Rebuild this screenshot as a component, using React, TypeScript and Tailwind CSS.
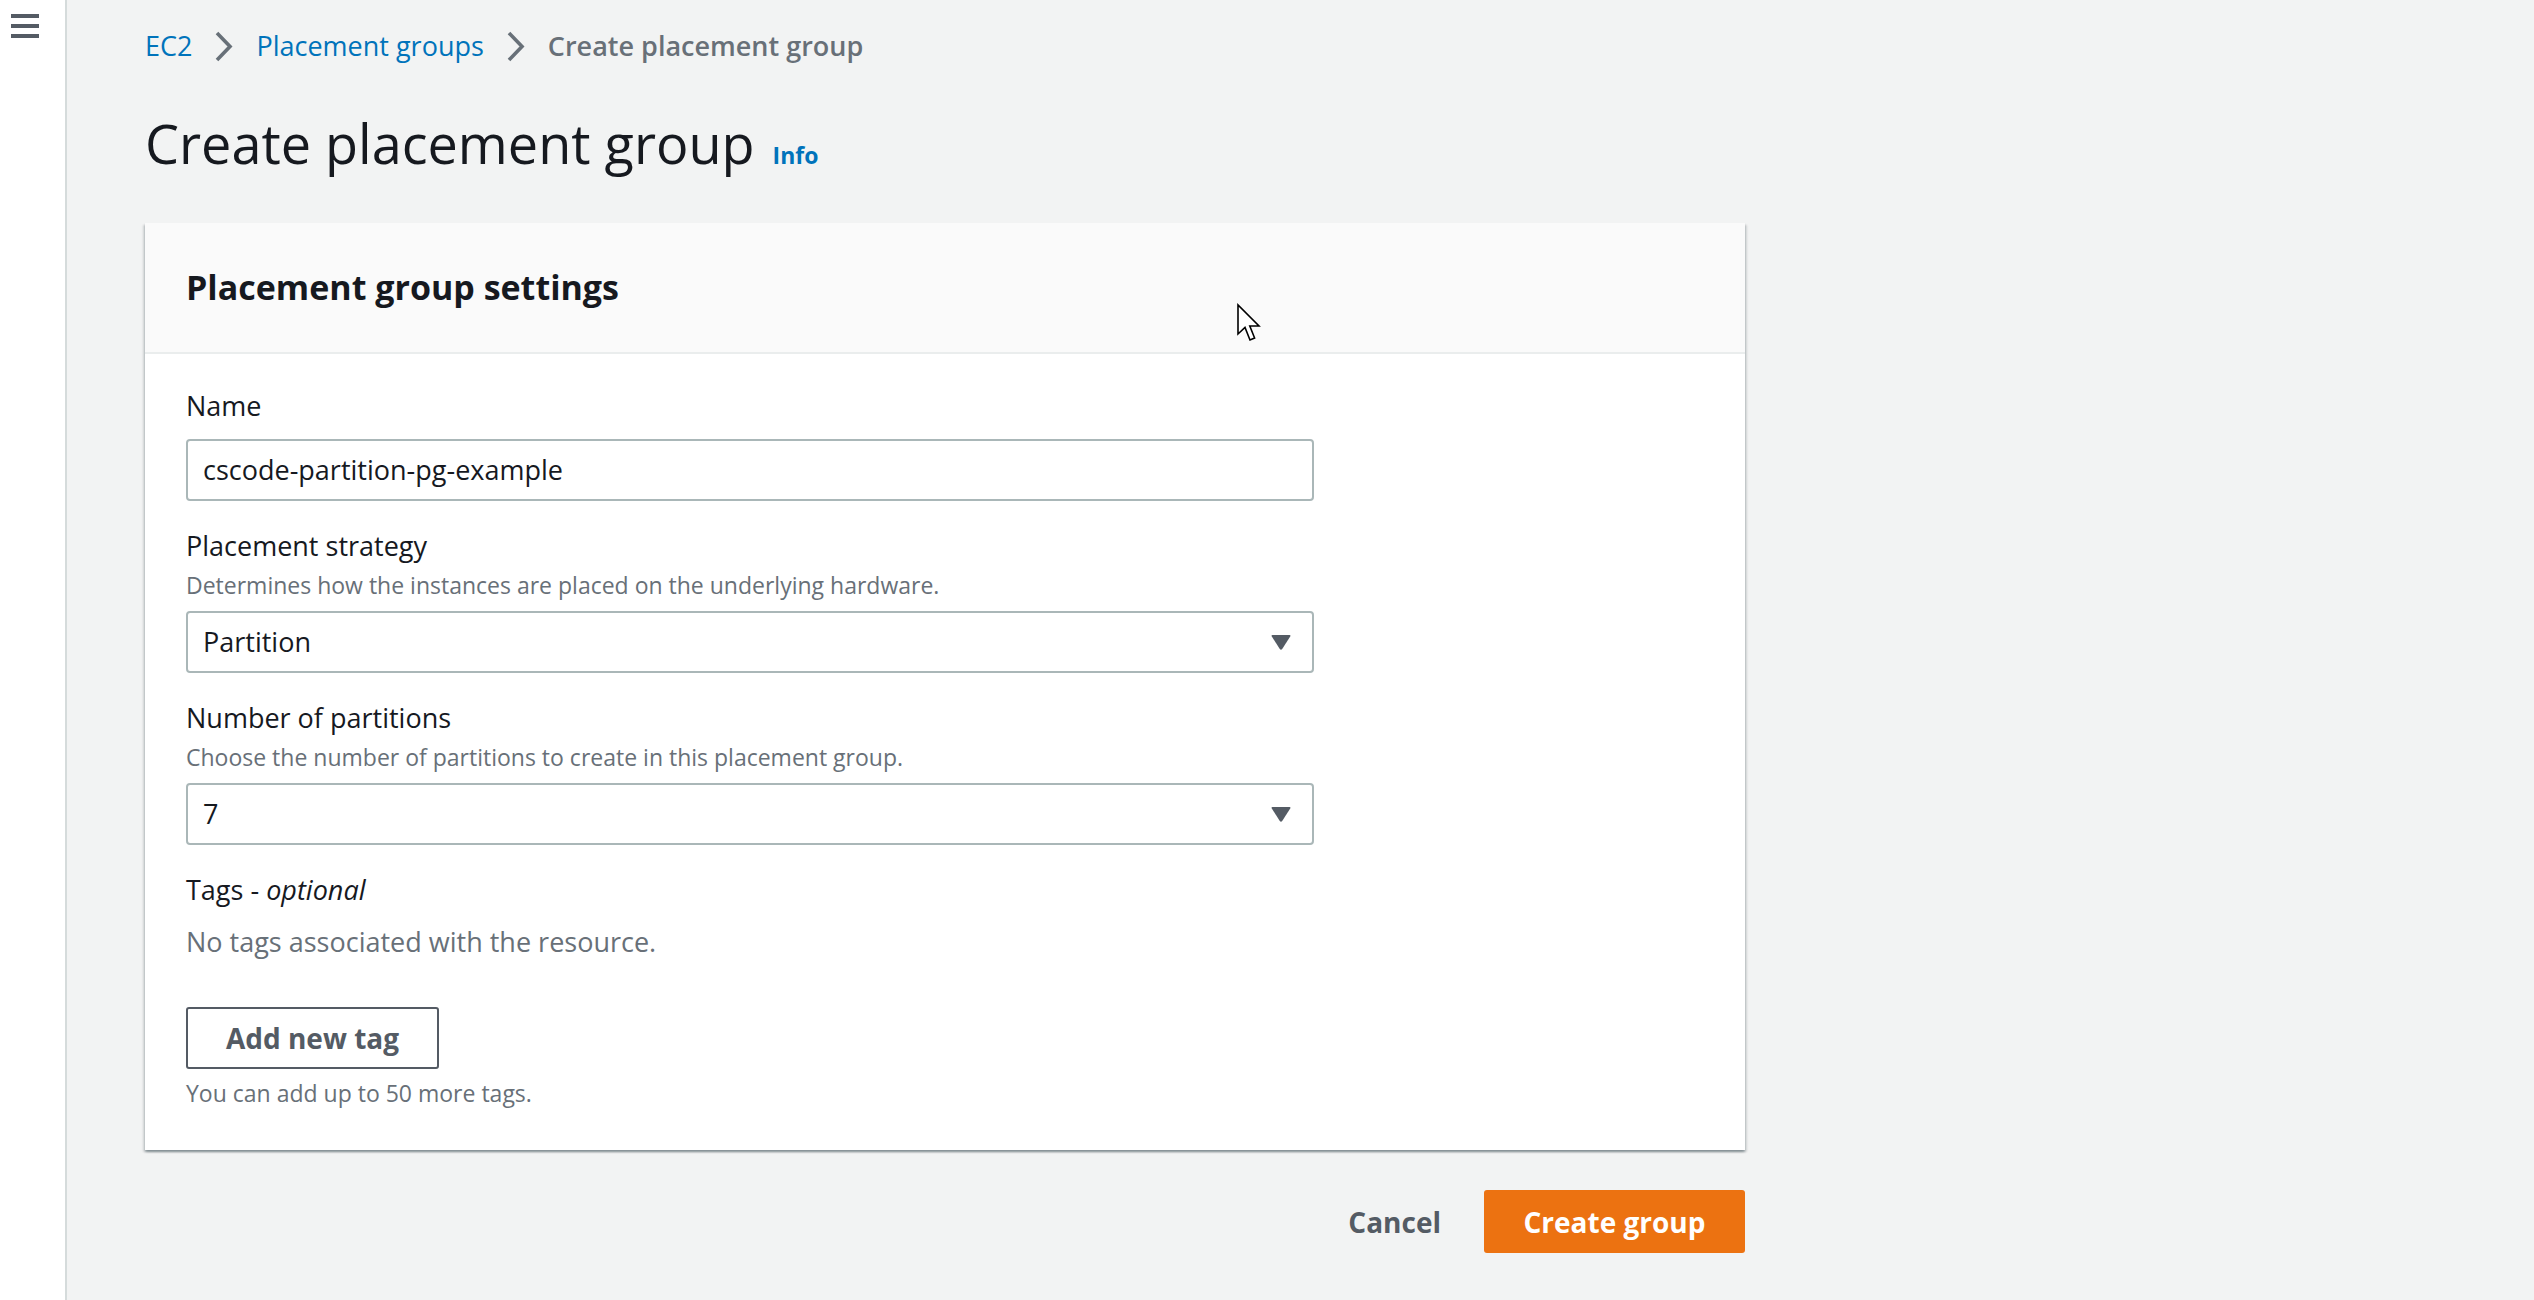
const font = { fontFamily: '"Open Sans", "Noto Sans", sans-serif' };

function Crumb() {
  return (
    <svg width="18" height="31" viewBox="0 0 18 31" className="mx-[23px] shrink-0">
      <path d="M2 2 L15 15.5 L2 29" fill="none" stroke="#687078" strokeWidth="3.6" />
    </svg>
  );
}

function Caret() {
  return (
    <svg width="22" height="18" viewBox="0 0 22 18" className="shrink-0">
      <path d="M2.5 2 L19.5 2 Q21 2 20.2 3.4 L12.2 16 Q11 17.6 9.8 16 L1.8 3.4 Q1 2 2.5 2 Z" fill="#545b64" />
    </svg>
  );
}

function Field({ label, desc, children }: { label: string; desc?: string; children: React.ReactNode }) {
  return (
    <div className="mt-[25px] first:mt-0">
      <div className="text-[27px] leading-[40px] text-[#16191f]">{label}</div>
      {desc && <div className="mt-[3px] text-[23px] leading-[32px] text-[#687078]">{desc}</div>}
      <div className={desc ? "mt-[10px]" : "mt-[13px]"}>{children}</div>
    </div>
  );
}

function Select({ value }: { value: string }) {
  return (
    <div className="flex h-[62px] w-[1128px] items-center justify-between rounded-[4px] border-2 border-[#aab7b8] bg-white pl-[15px] pr-[20px] text-[27px] text-[#16191f]">
      <span>{value}</span>
      <Caret />
    </div>
  );
}

export default function App() {
  return (
    <div className="flex min-h-[1300px] bg-[#f2f3f3]" style={font}>
      {/* side nav (collapsed) */}
      <aside className="w-[67px] shrink-0 border-r-2 border-[#d5dbdb] bg-white">
        <div className="ml-[11px] mt-[14px] flex w-[28px] flex-col gap-[6px]">
          <span className="h-[4px] bg-[#545b64]" />
          <span className="h-[4px] bg-[#545b64]" />
          <span className="h-[4px] bg-[#545b64]" />
        </div>
      </aside>

      <main className="flex-1 pl-[78px]">
        <nav className="flex items-center pt-[26px] text-[27px] leading-[40px]">
          <span className="text-[#0073bb]">EC2</span>
          <Crumb />
          <span className="text-[#0073bb]">Placement groups</span>
          <Crumb />
          <span className="font-semibold text-[#687078]">Create placement group</span>
        </nav>

        <div className="mt-[42px] flex items-baseline gap-[18px]">
          <h1 className="text-[54px] leading-[70px] font-normal text-[#16191f]">Create placement group</h1>
          <span className="text-[23px] font-bold text-[#0073bb]">Info</span>
        </div>

        <section className="mt-[45px] w-[1600px] bg-white shadow-[0_2px_2px_0_rgba(0,28,36,0.3),2px_2px_2px_0_rgba(0,28,36,0.12),-2px_2px_2px_0_rgba(0,28,36,0.12)]">
          <header className="relative flex h-[131px] items-center border-b-2 border-[#eaeded] bg-[#fafafa] px-[41px]">
            <h2 className="text-[34px] font-bold text-[#16191f]">Placement group settings</h2>
            <svg className="absolute left-[1091px] top-[80px]" width="26" height="40" viewBox="0 0 13 20">
              <path d="M1 1 L1 15.5 L4.5 12.2 L7 18.5 L9.3 17.5 L6.9 11.5 L11.5 11.5 Z" fill="white" stroke="black" strokeWidth="0.8" strokeLinejoin="miter" />
            </svg>
          </header>

          <div className="px-[41px] pt-[32px] pb-[41px]">
            <Field label="Name">
              <div className="flex h-[62px] w-[1128px] items-center rounded-[4px] border-2 border-[#aab7b8] bg-white px-[15px] text-[27px] text-[#16191f]">
                cscode-partition-pg-example
              </div>
            </Field>
            <Field label="Placement strategy" desc="Determines how the instances are placed on the underlying hardware.">
              <Select value="Partition" />
            </Field>
            <Field label="Number of partitions" desc="Choose the number of partitions to create in this placement group.">
              <Select value="7" />
            </Field>

            <div className="mt-[25px] text-[27px] leading-[40px] text-[#16191f]">
              Tags - <i>optional</i>
            </div>
            <div className="mt-[12px] text-[27px] leading-[40px] text-[#687078]">No tags associated with the resource.</div>
            <button className="mt-[45px] h-[62px] w-[253px] rounded-[3px] border-2 border-[#545b64] bg-white text-[28px] font-bold text-[#545b64]">
              Add new tag
            </button>
            <div className="mt-[8px] text-[23px] leading-[32px] text-[#687078]">You can add up to 50 more tags.</div>
          </div>
        </section>

        <div className="mt-[40px] flex w-[1600px] items-center justify-end gap-[43px]">
          <button className="text-[28px] font-bold text-[#545b64]">Cancel</button>
          <button className="h-[63px] w-[261px] rounded-[3px] bg-[#ec7211] text-[28px] font-bold text-white">Create group</button>
        </div>
      </main>
    </div>
  );
}
